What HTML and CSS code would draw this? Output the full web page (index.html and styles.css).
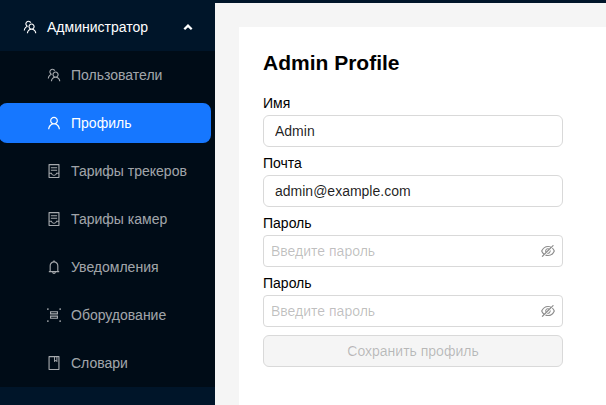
FILE: index.html
```html
<!DOCTYPE html>
<html lang="ru">
<head>
<meta charset="utf-8">
<title>Admin Profile</title>
<link rel="stylesheet" href="styles.css">
</head>
<body>
<svg class="sprite" aria-hidden="true">
<symbol id="team" viewBox="64 64 896 896"><path d="M824.2 699.9a301.55 301.55 0 00-86.4-60.4C783.1 602.8 812 546.8 812 484c0-110.8-92.4-201.7-203.2-200-109.1 1.7-197 90.6-197 200 0 62.8 29 118.8 74.2 155.5a300.95 300.95 0 00-86.4 60.4C345 754.6 314 826.8 312 903.8a8 8 0 008 8.2h56c4.3 0 7.9-3.4 8-7.7 1.9-58 25.4-112.3 66.7-153.5A226.62 226.62 0 01612 684c60.9 0 118.2 23.7 161.3 66.8C814.6 792 838 846.3 840 904.3c.1 4.3 3.7 7.7 8 7.7h56a8 8 0 008-8.2c-2-77-33-149.2-87.8-203.9zM612 612c-34.2 0-66.4-13.3-90.5-37.5a126.86 126.86 0 01-37.5-91.8c.3-32.8 13.4-64.5 36.3-88 24-24.6 56.1-38.3 90.4-38.7 33.9-.3 66.8 12.9 91 36.6 24.8 24.3 38.4 56.8 38.4 91.4 0 34.2-13.3 66.3-37.5 90.5A127.3 127.3 0 01612 612zM361.5 510.4c-.9-8.7-1.4-17.5-1.4-26.4 0-15.9 1.5-31.4 4.3-46.5.7-3.6-1.2-7.3-4.5-8.8-13.6-6.1-26.1-14.5-36.9-25.1a127.54 127.54 0 01-38.7-95.4c.9-32.1 13.8-62.6 36.3-85.6 24.7-25.3 57.9-39.1 93.2-38.7 31.9.3 62.7 12.6 86 34.4 7.9 7.4 14.7 15.6 20.4 24.4 2 3.1 5.9 4.4 9.3 3.2 17.6-6.1 36.2-10.4 55.3-12.4 5.6-.6 8.8-6.6 6.3-11.6-32.5-64.3-98.9-108.7-175.7-109.9-110.9-1.7-203.3 89.2-203.3 199.9 0 62.8 28.9 118.8 74.2 155.5-31.8 14.7-61.1 35-86.5 60.4-54.8 54.7-85.8 126.9-87.8 204a8 8 0 008 8.2h56.1c4.3 0 7.9-3.4 8-7.7 1.9-58 25.4-112.3 66.7-153.5 29.4-29.4 65.4-49.8 104.7-59.7 3.9-1 6.5-4.7 6-8.7z"/></symbol>
<symbol id="user" viewBox="64 64 896 896"><path d="M858.5 763.6a374 374 0 00-80.6-119.5 375.63 375.63 0 00-119.5-80.6c-.4-.2-.8-.3-1.2-.5C719.5 518 760 444.7 760 362c0-137-111-248-248-248S264 225 264 362c0 82.7 40.5 156 102.8 201.1-.4.2-.8.3-1.2.5-44.8 18.9-85 46-119.5 80.6a375.63 375.63 0 00-80.6 119.5A371.7 371.7 0 00136 901.8a8 8 0 008 8.2h60c4.4 0 7.9-3.5 8-7.8 2-77.2 33-149.5 87.8-204.3 56.7-56.7 132-87.9 212.2-87.9s155.5 31.2 212.2 87.9C779 752.7 810 825 812 902.2c.1 4.4 3.6 7.8 8 7.8h60a8 8 0 008-8.2c-1-47.8-10.9-94.3-29.5-138.2zM512 534c-45.9 0-89.1-17.9-121.6-50.4S340 407.9 340 362c0-45.9 17.9-89.1 50.4-121.6S466.1 190 512 190s89.1 17.9 121.6 50.4S684 316.1 684 362c0 45.9-17.9 89.1-50.4 121.6S557.9 534 512 534z"/></symbol>
<symbol id="container" viewBox="64 64 896 896"><path d="M832 64H192c-17.7 0-32 14.3-32 32v832c0 17.7 14.3 32 32 32h640c17.7 0 32-14.3 32-32V96c0-17.7-14.3-32-32-32zm-40 824H232V687h97.9c11.6 32.8 32 62.3 59.1 84.7 34.5 28.5 78.2 44.3 123 44.3s88.5-15.7 123-44.3c27.1-22.4 47.5-51.9 59.1-84.7H792v-63H643.6l-5.2 24.7C626.4 708.5 573.2 752 512 752s-114.4-43.5-126.5-103.2l-5.2-24.7H232V136h560v752zM320 341h384c4.4 0 8-3.6 8-8v-48c0-4.4-3.6-8-8-8H320c-4.4 0-8 3.6-8 8v48c0 4.4 3.6 8 8 8zm0 160h384c4.4 0 8-3.6 8-8v-48c0-4.4-3.6-8-8-8H320c-4.4 0-8 3.6-8 8v48c0 4.4 3.6 8 8 8z"/></symbol>
<symbol id="bell" viewBox="64 64 896 896"><path d="M816 768h-24V428c0-141.1-104.3-257.7-240-277.1V112c0-22.1-17.9-40-40-40s-40 17.9-40 40v38.9c-135.7 19.4-240 136-240 277.1v340h-24c-17.7 0-32 14.3-32 32v32c0 4.4 3.6 8 8 8h216c0 61.8 50.2 112 112 112s112-50.2 112-112h216c4.4 0 8-3.6 8-8v-32c0-17.7-14.3-32-32-32zM512 888c-26.5 0-48-21.5-48-48h96c0 26.5-21.5 48-48 48zM304 768V428c0-55.6 21.6-107.8 60.9-147.1S456.4 220 512 220c55.6 0 107.8 21.6 147.1 60.9S720 372.4 720 428v340H304z"/></symbol>
<symbol id="ungroup" viewBox="64 64 896 896"><path fill-rule="evenodd" d="M752 550H272c-8.800 0-16 7.200-16 16v176c0 8.800 7.200 16 16 16h480c8.800 0 16-7.200 16-16V566c0-8.800-7.200-16-16-16zm-56 140H328v-72h368zM752 266H272c-8.800 0-16 7.200-16 16v176c0 8.800 7.200 16 16 16h480c8.800 0 16-7.200 16-16V282c0-8.800-7.200-16-16-16zm-56 140H328v-72h368z"/><circle cx="120" cy="128" r="56"/><circle cx="904" cy="128" r="56"/><circle cx="120" cy="896" r="56"/><circle cx="904" cy="896" r="56"/></symbol>
<symbol id="book" viewBox="64 64 896 896"><path d="M832 64H192c-17.700 0-32 14.300-32 32v832c0 17.700 14.300 32 32 32h640c17.700 0 32-14.300 32-32V96c0-17.700-14.300-32-32-32zm-260 72h96v209.900L621.500 312 572 347.400V136zm220 752H232V136h280v296.900c0 3.300 1 6.600 3 9.300a15.900 15.900 0 0022.300 3.700l83.800-59.900 81.400 59.400c2.700 2 6 3.100 9.400 3.100 8.800 0 16-7.200 16-16V136h64v752z"/></symbol>
<symbol id="hidden" viewBox="64 64 896 896"><path d="M942.2 486.2Q889.47 375.11 816.7 305l-50.88 50.88C807.31 395.53 843.45 447.4 874.7 512 791.5 684.2 673.4 766 512 766q-72.67 0-133.87-22.38L323 798.75Q408 838 512 838q288.3 0 430.2-300.3a60.29 60.29 0 000-51.5zm-63.57-320.64L836 122.88a8 8 0 00-11.32 0L715.31 232.2Q624.86 186 512 186q-288.3 0-430.2 300.3a60.3 60.3 0 000 51.5q56.69 119.4 136.5 191.41L112.48 835a8 8 0 000 11.31L155.17 889a8 8 0 0011.31 0l712.15-712.12a8 8 0 000-11.32zM149.3 512C232.6 339.8 350.7 258 512 258c54.54 0 104.13 9.36 149.12 28.39l-70.3 70.3a176 176 0 00-238.13 238.13l-83.42 83.42C223.1 637.49 183.3 582.28 149.3 512zm246.7 0a112.11 112.11 0 01146.2-106.69L401.31 546.2A112 112 0 01396 512z"/><path d="M508 624c-3.46 0-6.87-.16-10.25-.47l-52.82 52.82a176.09 176.09 0 00227.42-227.42l-52.82 52.82c.31 3.38.47 6.79.47 10.25a111.94 111.94 0 01-112 112z"/></symbol>
</svg>
<div class="layout">
  <nav class="sider">
    <div class="menu-title"><svg class="icon"><use href="#team"/></svg><span>Администратор</span><svg class="arrow" viewBox="0 0 10 8"><path d="M1.300 6.300 5 2.600 8.700 6.300"/></svg></div>
    <div class="submenu">
      <a class="item"><svg class="icon"><use href="#team"/></svg><span>Пользователи</span></a>
      <a class="item active"><svg class="icon"><use href="#user"/></svg><span>Профиль</span></a>
      <a class="item"><svg class="icon"><use href="#container"/></svg><span>Тарифы трекеров</span></a>
      <a class="item"><svg class="icon"><use href="#container"/></svg><span>Тарифы камер</span></a>
      <a class="item"><svg class="icon"><use href="#bell"/></svg><span>Уведомления</span></a>
      <a class="item"><svg class="icon"><use href="#ungroup"/></svg><span>Оборудование</span></a>
      <a class="item"><svg class="icon"><use href="#book"/></svg><span>Словари</span></a>
    </div>
  </nav>
  <main class="content">
    <form class="panel">
      <h2 class="title">Admin Profile</h2>
      <label class="label" for="name">Имя</label>
      <div class="field"><input id="name" class="input" value="Admin"></div>
      <label class="label" for="mail">Почта</label>
      <div class="field"><input id="mail" class="input" value="admin@example.com"></div>
      <label class="label" for="pass">Пароль</label>
      <div class="field password"><input id="pass" class="input" type="password" placeholder="Введите пароль"><svg class="icon"><use href="#hidden"/></svg></div>
      <label class="label" for="repeat">Пароль</label>
      <div class="field password"><input id="repeat" class="input" type="password" placeholder="Введите пароль"><svg class="icon"><use href="#hidden"/></svg></div>
      <button class="save" type="button" disabled>Сохранить профиль</button>
    </form>
  </main>
</div>
</body>
</html>
```
FILE: styles.css
```css
* { box-sizing: border-box; }

body {
  margin: 0;
  font: 14px/22px "Liberation Sans", Arial, sans-serif;
  color: #000;
}

.sprite { display: none; }

.layout {
  display: flex;
  height: 405px;
  overflow: hidden;
  background: #001529;
}

.sider {
  width: 215px;
  flex: none;
  padding-top: 3px;
  color: rgba(255, 255, 255, 0.65);
}

.icon {
  width: 14px;
  height: 14px;
  flex: none;
  fill: currentColor;
}

.menu-title {
  display: flex;
  align-items: center;
  height: 48px;
  gap: 10px;
  padding: 0 22px 0 23px;
  color: #fff;
}

.arrow {
  width: 10px;
  height: 8px;
  margin-left: auto;
  fill: none;
  stroke: currentColor;
  stroke-width: 2.3;
}

.submenu {
  padding: 4px 4px 4px 0;
  display: grid;
  gap: 8px;
  background: #000c17;
}

.item {
  display: flex;
  align-items: center;
  gap: 10px;
  height: 40px;
  margin-left: -1px;
  padding-left: 48px;
  border-radius: 8px;
}

.active {
  background: #1677ff;
  color: #fff;
}

.content {
  flex: 1;
  margin-top: 3px;
  padding: 24px 0 0 24px;
  background: #f5f5f5;
}

.panel {
  height: 100%;
  padding: 24px;
  background: #fff;
}

.title {
  margin: 0 0 17px;
  font-size: 21px;
  line-height: 24px;
}

.label {
  display: block;
  width: 300px;
  height: 22px;
}

.field {
  display: flex;
  align-items: center;
  width: 300px;
  height: 32px;
  margin: 1px 0 5px;
  padding: 0 11px;
  border: 1px solid #d9d9d9;
  border-radius: 6px;
}

.password {
  padding: 0 7px;
  border-radius: 4px;
  color: rgba(0, 0, 0, 0.45);
}

.input {
  flex: 1;
  min-width: 0;
  padding: 0;
  border: 0;
  outline: 0;
  background: none;
  font: inherit;
  color: rgba(0, 0, 0, 0.88);
}

.input::placeholder { color: rgba(0, 0, 0, 0.25); }

.save {
  display: block;
  width: 300px;
  height: 32px;
  margin-top: 8px;
  padding: 0;
  border: 1px solid #d9d9d9;
  border-radius: 6px;
  background: #f5f5f5;
  font: inherit;
  color: rgba(0, 0, 0, 0.25);
}
```
